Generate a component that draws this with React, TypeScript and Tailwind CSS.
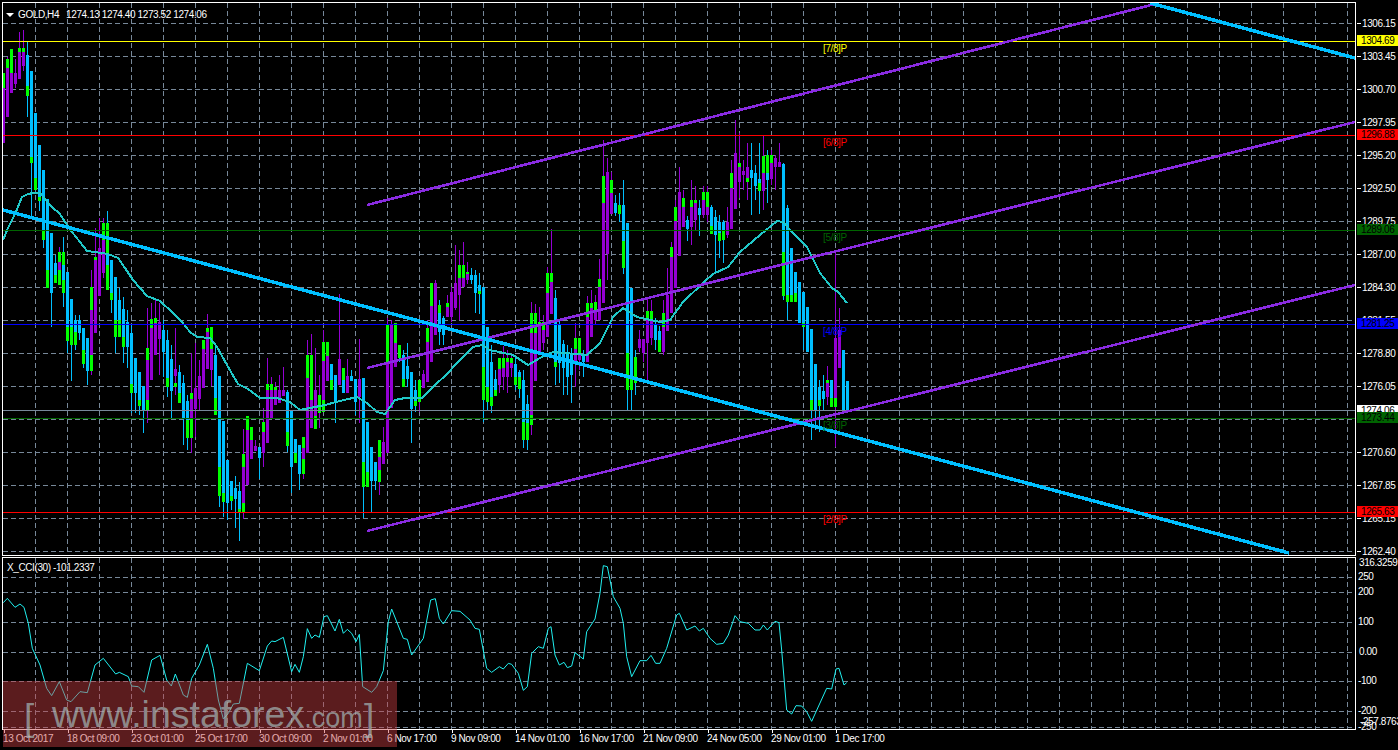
import React from 'react';

const BLUE = '#00bfff';
const VIOLET = '#9400d3';
const LIME = '#00ff00';
const CHANNEL = '#8a2be2';
const GRID = '#778899';

// kind, high, body top, body bottom, low, then green stretches (top, bottom, ...)
type Candle = [string, number, number, number, number, ...number[]];

const candles: Candle[] = [
  ['p', 73, 88, 143, 143, 73, 88],
  ['p', 57, 68, 117, 117, 59, 68],
  ['p', 49, 73, 93, 93, 49, 73],
  ['p', 59, 73, 84, 88],
  ['p', 32, 52, 79, 79, 48, 52],
  ['p', 30, 52, 66, 71, 48, 52],
  ['c', 42, 55, 86, 117, 86, 96],
  ['c', 71, 71, 157, 217, 157, 163],
  ['c', 113, 113, 178, 190, 178, 190],
  ['c', 145, 145, 197, 211, 197, 201],
  ['c', 170, 170, 230, 248, 230, 240],
  ['c', 199, 199, 270, 288, 270, 288],
  ['c', 233, 233, 293, 327],
  ['c', 255, 263, 275, 283, 275, 283],
  ['p', 247, 262, 270, 285, 252, 262, 270, 285],
  ['c', 237, 265, 280, 307, 252, 265, 280, 293],
  ['c', 272, 272, 327, 353, 327, 341],
  ['c', 299, 299, 327, 381, 327, 345],
  ['c', 315, 320, 332, 350, 332, 345],
  ['c', 315, 320, 333, 340],
  ['c', 328, 328, 350, 368, 350, 364],
  ['c', 338, 338, 371, 385],
  ['p', 270, 310, 355, 375, 287, 310, 355, 371],
  ['p', 228, 260, 333, 333, 257, 260],
  ['p', 218, 248, 296, 296],
  ['p', 218, 240, 273, 278, 223, 240],
  ['c', 211, 253, 265, 290, 223, 253, 265, 290],
  ['c', 260, 260, 295, 313, 293, 300],
  ['c', 277, 277, 320, 353, 320, 337],
  ['c', 288, 300, 320, 337, 320, 337],
  ['c', 297, 309, 337, 363, 337, 347],
  ['c', 310, 322, 347, 368],
  ['c', 325, 333, 384, 413, 384, 393],
  ['c', 358, 358, 393, 413],
  ['c', 372, 372, 406, 415, 400, 406],
  ['c', 386, 386, 410, 433],
  ['p', 308, 360, 400, 423, 348, 360, 400, 410],
  ['p', 303, 328, 380, 380, 319, 328],
  ['p', 300, 323, 355, 355, 318, 323],
  ['p', 303, 322, 339, 375],
  ['c', 320, 330, 352, 377],
  ['c', 330, 340, 387, 397, 378, 387],
  ['c', 345, 359, 391, 418],
  ['p', 328, 369, 376, 395, 383, 387],
  ['c', 365, 372, 403, 403, 393, 403],
  ['c', 375, 383, 418, 445],
  ['c', 395, 401, 438, 450, 420, 438],
  ['p', 353, 399, 418, 453, 393, 399, 418, 438],
  ['p', 343, 388, 409, 437],
  ['p', 360, 376, 399, 410],
  ['p', 340, 349, 388, 388, 340, 349],
  ['p', 314, 332, 369, 369, 328, 332],
  ['p', 327, 349, 370, 386, 327, 349],
  ['c', 345, 355, 398, 415, 398, 415],
  ['c', 376, 376, 467, 507, 467, 496],
  ['c', 421, 421, 502, 517, 493, 502],
  ['c', 460, 460, 503, 520],
  ['c', 481, 481, 496, 510, 496, 501],
  ['c', 476, 488, 499, 528],
  ['c', 482, 491, 512, 541, 509, 512],
  ['p', 429, 467, 503, 519, 454, 467, 503, 513],
  ['p', 416, 430, 485, 485, 416, 430],
  ['p', 427, 440, 459, 459, 427, 440],
  ['p', 440, 446, 451, 451],
  ['c', 447, 447, 458, 479],
  ['p', 408, 432, 453, 467, 422, 432],
  ['p', 358, 390, 443, 443, 384, 390],
  ['p', 377, 390, 418, 418, 384, 390],
  ['p', 382, 390, 405, 405, 387, 390],
  ['p', 375, 390, 403, 403],
  ['p', 367, 390, 396, 396],
  ['c', 390, 392, 437, 452, 432, 446],
  ['c', 411, 411, 467, 493],
  ['c', 439, 439, 453, 463, 453, 463],
  ['c', 445, 445, 474, 490],
  ['p', 437, 448, 459, 479, 437, 448, 459, 474],
  ['p', 340, 378, 453, 453, 355, 378],
  ['p', 334, 400, 428, 428, 355, 400],
  ['p', 348, 390, 427, 429, 416, 429],
  ['p', 375, 395, 413, 428, 395, 413],
  ['p', 330, 361, 400, 412, 342, 361, 400, 412],
  ['p', 342, 356, 381, 381, 342, 356],
  ['c', 364, 364, 380, 390, 380, 390],
  ['c', 375, 375, 402, 423],
  ['p', 294, 359, 385, 385],
  ['c', 368, 380, 393, 393, 368, 380],
  ['p', 359, 376, 393, 393],
  ['c', 370, 376, 381, 381],
  ['c', 379, 379, 402, 415],
  ['p', 339, 379, 397, 423],
  ['c', 378, 378, 487, 518, 462, 487],
  ['c', 422, 422, 487, 487, 472, 487],
  ['c', 447, 447, 481, 512],
  ['c', 462, 462, 481, 490],
  ['p', 440, 457, 470, 495, 440, 457, 470, 482],
  ['p', 427, 442, 464, 464],
  ['p', 318, 362, 453, 453, 325, 362],
  ['p', 320, 325, 408, 408],
  ['p', 323, 343, 367, 367, 323, 343],
  ['c', 345, 345, 358, 362, 345, 358],
  ['c', 350, 355, 379, 387, 379, 387],
  ['c', 343, 366, 379, 387],
  ['c', 372, 372, 409, 443],
  ['c', 380, 390, 406, 412, 401, 406],
  ['p', 380, 382, 402, 412, 380, 402],
  ['p', 370, 374, 388, 388],
  ['p', 320, 332, 382, 382, 328, 342],
  ['p', 283, 306, 362, 362, 283, 306],
  ['p', 280, 283, 335, 335],
  ['c', 300, 306, 332, 345, 305, 313],
  ['c', 316, 318, 335, 345],
  ['p', 295, 303, 317, 317, 303, 307],
  ['p', 287, 292, 317, 322],
  ['p', 245, 283, 308, 310],
  ['p', 250, 278, 295, 320, 265, 278],
  ['p', 242, 278, 287, 287, 265, 278],
  ['p', 262, 274, 280, 284, 272, 274],
  ['c', 268, 275, 280, 284],
  ['c', 270, 275, 293, 313],
  ['c', 273, 285, 294, 314, 291, 294],
  ['c', 287, 287, 400, 422, 367, 400],
  ['c', 327, 327, 397, 410, 387, 402],
  ['c', 345, 362, 400, 413, 397, 406],
  ['c', 370, 379, 390, 395, 390, 396],
  ['p', 358, 369, 385, 393, 358, 369],
  ['p', 346, 368, 377, 390, 358, 368],
  ['p', 350, 362, 377, 393, 358, 362],
  ['p', 355, 363, 368, 377, 358, 363],
  ['c', 357, 364, 385, 390, 377, 385],
  ['c', 370, 372, 385, 398, 377, 389],
  ['c', 370, 380, 423, 448, 422, 440],
  ['c', 395, 404, 423, 450, 423, 440],
  ['p', 302, 333, 425, 435, 313, 333, 415, 425],
  ['p', 304, 333, 381, 381, 313, 333],
  ['p', 307, 325, 353, 353, 322, 325],
  ['p', 315, 330, 343, 350, 322, 330],
  ['p', 267, 293, 337, 337, 273, 293],
  ['p', 229, 282, 314, 314, 273, 282],
  ['c', 290, 298, 367, 385, 362, 367],
  ['c', 320, 325, 363, 383],
  ['c', 340, 344, 368, 395],
  ['c', 345, 352, 377, 395],
  ['c', 348, 353, 375, 403],
  ['p', 323, 349, 362, 387, 338, 349],
  ['p', 338, 353, 360, 370, 338, 353],
  ['c', 350, 355, 362, 377],
  ['p', 296, 317, 362, 362, 303, 317],
  ['p', 290, 308, 337, 337, 303, 308],
  ['p', 295, 310, 320, 325, 302, 310],
  ['p', 259, 287, 320, 320, 279, 287],
  ['p', 140, 203, 303, 303, 176, 203],
  ['p', 158, 172, 254, 280],
  ['p', 172, 193, 214, 214, 180, 193],
  ['c', 195, 203, 213, 216],
  ['c', 193, 205, 214, 222, 205, 214],
  ['c', 180, 205, 241, 274, 241, 268],
  ['c', 223, 223, 353, 410, 353, 390],
  ['c', 288, 288, 378, 410, 378, 390],
  ['c', 350, 357, 383, 395, 357, 383],
  ['p', 330, 339, 348, 352],
  ['p', 340, 339, 353, 362],
  ['p', 297, 320, 343, 380, 311, 320],
  ['p', 300, 319, 338, 345, 311, 319],
  ['c', 318, 325, 340, 350],
  ['c', 326, 331, 352, 352, 340, 352],
  ['p', 300, 327, 352, 355, 313, 327],
  ['p', 268, 295, 331, 331],
  ['p', 242, 257, 313, 313, 247, 257],
  ['p', 200, 221, 288, 288, 207, 221],
  ['p', 167, 192, 256, 256],
  ['p', 190, 207, 227, 227, 198, 207],
  ['c', 216, 220, 229, 241],
  ['p', 180, 207, 227, 245, 200, 207],
  ['p', 186, 203, 220, 230, 200, 203],
  ['c', 200, 208, 215, 236],
  ['p', 186, 200, 215, 218, 192, 200],
  ['p', 186, 207, 215, 222, 192, 207],
  ['c', 205, 207, 226, 234, 226, 234],
  ['c', 210, 217, 235, 272],
  ['c', 215, 222, 240, 258, 233, 241],
  ['c', 220, 222, 240, 263, 231, 240],
  ['p', 207, 222, 235, 238],
  ['p', 160, 188, 229, 229, 173, 188],
  ['p', 120, 153, 209, 209],
  ['p', 133, 167, 182, 198, 163, 167],
  ['p', 160, 171, 175, 190],
  ['p', 143, 167, 182, 200, 178, 182],
  ['c', 143, 170, 178, 215],
  ['c', 165, 173, 186, 200],
  ['c', 143, 179, 191, 214, 183, 191],
  ['p', 135, 167, 191, 210, 156, 173],
  ['c', 150, 173, 180, 203, 155, 173],
  ['p', 150, 163, 179, 185, 155, 163],
  ['p', 155, 158, 167, 190],
  ['p', 143, 162, 167, 167],
  ['c', 163, 164, 296, 300, 252, 296],
  ['c', 205, 208, 297, 320, 295, 302],
  ['c', 248, 248, 295, 302, 295, 302],
  ['c', 272, 272, 293, 302, 293, 302],
  ['c', 282, 282, 323, 323],
  ['c', 292, 292, 327, 350, 323, 327],
  ['c', 307, 307, 352, 352],
  ['c', 329, 329, 400, 440, 400, 410],
  ['c', 364, 364, 410, 430],
  ['c', 380, 387, 405, 432, 400, 406],
  ['c', 375, 391, 399, 410],
  ['p', 366, 383, 397, 405, 380, 383],
  ['c', 380, 380, 398, 407, 398, 407],
  ['p', 253, 338, 398, 447, 398, 407],
  ['p', 308, 330, 368, 368],
  ['c', 350, 350, 410, 412],
  ['c', 381, 381, 410, 413],
];

const movingAverage = [
  [3, 240], [8, 228], [15, 214], [22, 197], [28, 194], [33, 193], [40, 193], [44, 198], [52, 207], [60, 214],
  [65, 222], [72, 232], [80, 242], [87, 251], [95, 252], [108, 254], [118, 258], [125, 268], [133, 280], [147, 296],
  [160, 301], [173, 313], [182, 322], [190, 332], [197, 337], [210, 338], [217, 347], [227, 365], [238, 384], [248, 389],
  [260, 398], [277, 398], [290, 402], [300, 410], [310, 408], [325, 405], [340, 401], [357, 397], [367, 403], [377, 412],
  [385, 414], [395, 400], [405, 398], [422, 398], [433, 387], [448, 373], [457, 363], [473, 347], [482, 345], [490, 350],
  [513, 355], [528, 365], [540, 358], [553, 352], [587, 355], [600, 343], [613, 317], [623, 308], [637, 317], [660, 322],
  [670, 320], [683, 302], [703, 283], [713, 274], [728, 267], [740, 252], [760, 235], [777, 221], [783, 222], [793, 233],
  [807, 247], [820, 273], [832, 288], [838, 292], [847, 303],
];

const cciLeft = [
  [10, 158], [22, 145], [45, 172], [60, 162], [72, 172], [85, 220], [97, 295], [120, 345], [140, 415], [155, 437],
  [178, 395], [200, 450], [213, 455], [240, 425], [262, 428], [285, 345], [310, 325], [347, 372], [358, 367], [385, 380],
  [395, 408], [415, 410], [432, 427], [455, 330], [480, 316], [500, 390], [514, 408], [526, 372], [550, 435], [562, 442],
  [575, 385], [598, 345], [622, 283], [640, 355], [655, 450], [670, 507], [685, 490], [700, 462], [718, 460], [742, 340],
  [778, 362], [802, 288], [815, 273], [825, 275], [850, 262], [875, 365], [885, 343], [898, 367], [910, 320], [922, 236],
  [935, 265], [945, 255], [958, 262], [972, 200], [982, 197], [1005, 243], [1018, 208], [1030, 250], [1042, 238], [1055, 250],
  [1068, 275], [1078, 253], [1088, 410], [1115, 427], [1130, 410], [1150, 362], [1165, 215], [1175, 177], [1210, 265], [1222, 268],
  [1235, 315], [1270, 265], [1292, 150], [1306, 146], [1318, 205], [1320, 208],
];

const cciRight = [
  [0, 208], [10, 222], [35, 182], [60, 184], [90, 210], [105, 235], [118, 238], [140, 355], [155, 367], [178, 350],
  [190, 357], [205, 340], [215, 343], [235, 370], [250, 421], [262, 410], [275, 310], [295, 290], [310, 295], [325, 235],
  [333, 230], [345, 315], [358, 345], [372, 337], [382, 353], [395, 348], [405, 308], [430, 327], [440, 245], [465, 207],
  [480, 130], [490, 47], [502, 50], [520, 140], [540, 175], [550, 220], [560, 320], [575, 380], [600, 332], [620, 332],
  [633, 316], [647, 340], [660, 340], [680, 295], [710, 195], [718, 190], [740, 240], [765, 228], [778, 243], [790, 235],
  [810, 265], [830, 283], [850, 280], [865, 255], [885, 197], [900, 215], [925, 220], [945, 240], [960, 240], [970, 225],
  [982, 240], [1005, 214], [1017, 218], [1025, 300], [1040, 480], [1055, 492], [1068, 467], [1085, 468], [1100, 485], [1115, 514],
  [1160, 415], [1175, 417], [1188, 357], [1197, 355], [1212, 405], [1220, 398],
];

const cciPoints = [
  ...cciLeft.map(([x, y]) => `${x / 3},${550 + y / 3}`),
  ...cciRight.map(([x, y]) => `${440 + x / 3},${550 + y / 3}`),
].join(' ');

const levels = [
  { y: 41, color: '#ffff00' },
  { y: 135, color: '#ff0000' },
  { y: 230, color: '#006400' },
  { y: 324, color: '#0000ff' },
  { y: 410, color: '#778899' },
  { y: 418, color: '#006400' },
  { y: 512, color: '#ff0000' },
];

const murrey = [
  { label: '[7/8]P', y: 52, color: '#ffff00' },
  { label: '[6/8]P', y: 146, color: '#ff0000' },
  { label: '[5/8]P', y: 241, color: '#006400' },
  { label: '[4/8]P', y: 335, color: '#0000ff' },
  { label: '[3/8]P', y: 429, color: '#006400' },
  { label: '[2/8]P', y: 523, color: '#ff0000' },
];

const prices = [
  '1306.15', '1303.45', '1300.70', '1297.95', '1295.20', '1292.50', '1289.75', '1287.00', '1284.30',
  '1281.55', '1278.80', '1276.05', '1273.35', '1270.60', '1267.85', '1265.15', '1262.40',
];

const priceTags = [
  { text: '1304.69', top: 35, cls: 'bg-[#ffff00]' },
  { text: '1296.88', top: 129, cls: 'bg-[#ff0000]' },
  { text: '1289.06', top: 224, cls: 'bg-[#006400]' },
  { text: '1281.25', top: 318, cls: 'bg-[#0000ff]' },
  { text: '1274.06', top: 405, cls: 'bg-white' },
  { text: '1273.44', top: 412, cls: 'bg-[#006400]' },
  { text: '1265.63', top: 506, cls: 'bg-[#ff0000]' },
];

const cciScale = [
  { text: '316.3259', y: 563, x: 3 },
  { text: '250', y: 577, x: 2 },
  { text: '200', y: 592, x: 2 },
  { text: '100', y: 622, x: 2 },
  { text: '0.00', y: 652, x: 3 },
  { text: '-100', y: 681, x: 2 },
  { text: '-200', y: 711, x: 2 },
  { text: '-250', y: 727, x: 2 },
  { text: '-257.8763', y: 722, x: 4 },
];

const dates = [
  '13 Oct 2017', '18 Oct 09:00', '23 Oct 01:00', '25 Oct 17:00', '30 Oct 09:00', '2 Nov 01:00', '6 Nov 17:00',
  '9 Nov 09:00', '14 Nov 01:00', '16 Nov 17:00', '21 Nov 09:00', '24 Nov 05:00', '29 Nov 01:00', '1 Dec 17:00',
];

const gridX = Array.from({ length: 42 }, (_, i) => 35 + 32 * i);
const gridY = Array.from({ length: 17 }, (_, i) => 23 + 33 * i);
const cciGridY = [577, 592, 622, 652, 681, 711, 727];

function VerticalGrid({ top, bottom }: { top: number; bottom: number }) {
  return (
    <>
      {gridX.map((x) => (
        <line key={x} x1={x + 0.5} x2={x + 0.5} y1={top} y2={bottom} stroke={GRID} strokeDasharray="5 3" />
      ))}
    </>
  );
}

function HorizontalGrid({ rows }: { rows: number[] }) {
  return (
    <>
      {rows.map((y) => (
        <line key={y} x1={3} x2={1355} y1={y + 0.5} y2={y + 0.5} stroke={GRID} strokeDasharray="5 3" />
      ))}
    </>
  );
}

function PriceChart() {
  return (
    <svg width="1352" height="552" viewBox="3 3 1352 552" className="block" shapeRendering="crispEdges">
      <VerticalGrid top={3} bottom={555} />
      <HorizontalGrid rows={gridY} />

      {candles.map(([kind, high, top, bottom, low, ...green], i) => {
        const x = 3 + 4 * i;
        const color = kind === 'p' ? VIOLET : BLUE;
        return (
          <g key={i}>
            <rect x={x} y={high} width={1} height={low - high} fill={color} />
            <rect x={x - 1} y={top} width={3} height={bottom - top} fill={color} />
            {green.map((g, k) =>
              k % 2 === 0 ? <rect key={k} x={x - 1} y={g} width={3} height={green[k + 1] - g} fill={LIME} /> : null,
            )}
          </g>
        );
      })}

      <polyline
        points={movingAverage.map(([x, y]) => `${x},${y}`).join(' ')}
        fill="none"
        stroke="#20c8c8"
        strokeWidth={2}
      />

      {levels.map((l) => (
        <line key={l.y} x1={3} x2={1355} y1={l.y + 0.5} y2={l.y + 0.5} stroke={l.color} />
      ))}

      <line x1={367} y1={205} x2={1159} y2={3} stroke={CHANNEL} strokeWidth={2.6} />
      <line x1={367} y1={368} x2={1355} y2={122} stroke={CHANNEL} strokeWidth={2.6} />
      <line x1={367} y1={531} x2={1355} y2={285} stroke={CHANNEL} strokeWidth={2.6} />
      <line x1={3} y1={210} x2={1289} y2={553} stroke={BLUE} strokeWidth={3.5} />
      <line x1={1150} y1={3} x2={1355} y2={58} stroke={BLUE} strokeWidth={3.5} />

      {murrey.map((m) => (
        <text key={m.label} x={823} y={m.y} fill={m.color} fontSize={10} shapeRendering="auto">
          {m.label}
        </text>
      ))}
    </svg>
  );
}

function CciChart() {
  return (
    <svg width="1352" height="171" viewBox="3 558 1352 171" className="block" shapeRendering="crispEdges">
      <VerticalGrid top={558} bottom={729} />
      <HorizontalGrid rows={cciGridY} />
      <polyline points={cciPoints} fill="none" stroke="#20f0f0" strokeWidth={1} shapeRendering="auto" />
    </svg>
  );
}

function PriceAxis() {
  return (
    <div className="relative w-[42px] h-[554px] pt-[5px]">
      {prices.map((p) => (
        <div key={p} className="flex items-center h-[33px]">
          <div className="w-[4px] h-px bg-white ml-px" />
          <span className="ml-px">{p}</span>
        </div>
      ))}
      {priceTags.map((t) => (
        <div
          key={t.text}
          className={`absolute left-px right-0 h-[11px] flex items-center pl-[4px] text-black ${t.cls}`}
          style={{ top: t.top - 2 }}
        >
          {t.text}
        </div>
      ))}
    </div>
  );
}

function CciAxis() {
  return (
    <div className="relative w-[42px] h-[173px]">
      {cciScale.map((s) => (
        <span
          key={s.text}
          className="absolute leading-[10px] whitespace-nowrap"
          style={{ top: s.y - 562, left: s.x }}
        >
          {s.text}
        </span>
      ))}
    </div>
  );
}

export default function App() {
  return (
    <div className="relative w-[1398px] h-[750px] overflow-hidden bg-black pt-[2px] pl-[2px] text-white text-[10px] tracking-[-0.4px] font-['Liberation_Sans',Arial,sans-serif]">
      <div className="flex">
        <div className="relative w-[1354px] h-[554px] border border-white">
          <PriceChart />
          <div className="absolute left-[3px] top-[4px] flex items-center">
            <span className="w-0 h-0 border-x-[4px] border-x-transparent border-t-[4px] border-t-white mr-[4px]" />
            <span className="mr-[7px]">GOLD,H4</span>
            <span className="whitespace-pre">1274.13 1274.40 1273.52 1274.06</span>
          </div>
        </div>
        <PriceAxis />
      </div>

      <div className="flex mt-px">
        <div className="relative w-[1354px] h-[173px] border border-white">
          <CciChart />
          <div className="absolute left-[4px] top-[2px]">X_CCI(30) -101.2337</div>
        </div>
        <CciAxis />
      </div>

      <div className="flex pl-px">
        {dates.map((d) => (
          <div key={d} className="w-[64px] shrink-0">
            <div className="w-px h-[3px] bg-white ml-px" />
            <div className="whitespace-nowrap leading-[11px]">{d}</div>
          </div>
        ))}
      </div>

      <div className="absolute left-[3px] top-[681px] w-[394px] h-[66px] bg-[rgba(202,62,66,0.45)] text-[rgba(165,185,185,0.7)] tracking-normal">
        <span className="absolute left-[21px] top-[17px] text-[37px] leading-[40px]">[</span>
        <span className="absolute left-[49px] top-[13px] text-[37.5px] leading-[40px] whitespace-nowrap">
          www.instaforex<span className="text-[27px]">.com</span>
        </span>
        <span className="absolute left-[361px] top-[17px] text-[37px] leading-[40px]">]</span>
      </div>
    </div>
  );
}
